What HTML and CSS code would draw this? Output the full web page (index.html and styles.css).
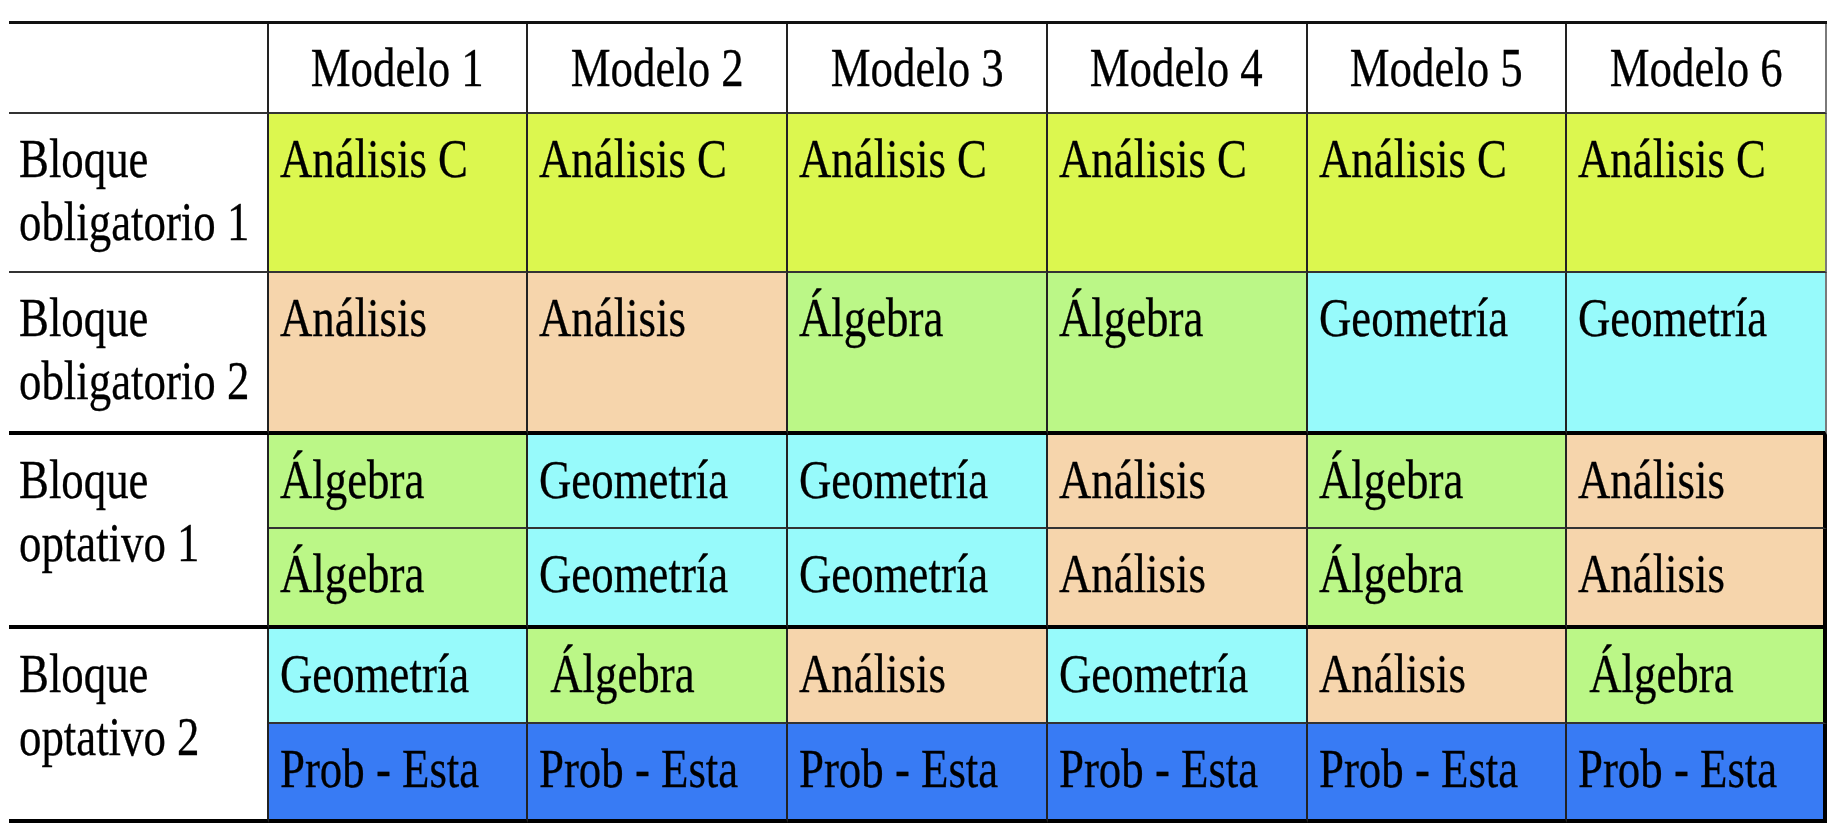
FILE: index.html
```html
<!DOCTYPE html>
<html lang="es">
<head>
<meta charset="utf-8">
<title>Modelos</title>
<link rel="stylesheet" href="styles.css">
</head>
<body>
<div class="grid">
  <div class="cell corner"></div>
  <div class="cell hd"><span class="t">Modelo 1</span></div>
  <div class="cell hd"><span class="t">Modelo 2</span></div>
  <div class="cell hd"><span class="t">Modelo 3</span></div>
  <div class="cell hd"><span class="t">Modelo 4</span></div>
  <div class="cell hd"><span class="t">Modelo 5</span></div>
  <div class="cell hd end"><span class="t">Modelo 6</span></div>

  <div class="cell lbl"><span class="t">Bloque<br>obligatorio 1</span></div>
  <div class="cell yel"><span class="t">Análisis C</span></div>
  <div class="cell yel"><span class="t">Análisis C</span></div>
  <div class="cell yel"><span class="t">Análisis C</span></div>
  <div class="cell yel"><span class="t">Análisis C</span></div>
  <div class="cell yel"><span class="t">Análisis C</span></div>
  <div class="cell yel end"><span class="t">Análisis C</span></div>

  <div class="cell lbl thick"><span class="t">Bloque<br>obligatorio 2</span></div>
  <div class="cell pea thick"><span class="t">Análisis</span></div>
  <div class="cell pea thick"><span class="t">Análisis</span></div>
  <div class="cell grn thick"><span class="t">Álgebra</span></div>
  <div class="cell grn thick"><span class="t">Álgebra</span></div>
  <div class="cell cyn thick"><span class="t">Geometría</span></div>
  <div class="cell cyn thick end"><span class="t">Geometría</span></div>

  <div class="cell lbl span2 thick"><span class="t">Bloque<br>optativo 1</span></div>
  <div class="cell grn"><span class="t">Álgebra</span></div>
  <div class="cell cyn"><span class="t">Geometría</span></div>
  <div class="cell cyn"><span class="t">Geometría</span></div>
  <div class="cell pea"><span class="t">Análisis</span></div>
  <div class="cell grn"><span class="t">Álgebra</span></div>
  <div class="cell pea end-thick"><span class="t">Análisis</span></div>

  <div class="cell grn thick"><span class="t">Álgebra</span></div>
  <div class="cell cyn thick"><span class="t">Geometría</span></div>
  <div class="cell cyn thick"><span class="t">Geometría</span></div>
  <div class="cell pea thick"><span class="t">Análisis</span></div>
  <div class="cell grn thick"><span class="t">Álgebra</span></div>
  <div class="cell pea thick end-thick"><span class="t">Análisis</span></div>

  <div class="cell lbl span2 thick"><span class="t">Bloque<br>optativo 2</span></div>
  <div class="cell cyn"><span class="t">Geometría</span></div>
  <div class="cell grn"><span class="t">&nbsp;Álgebra</span></div>
  <div class="cell pea"><span class="t">Análisis</span></div>
  <div class="cell cyn"><span class="t">Geometría</span></div>
  <div class="cell pea"><span class="t">Análisis</span></div>
  <div class="cell grn end-thick"><span class="t">&nbsp;Álgebra</span></div>

  <div class="cell blu thick"><span class="t">Prob - Esta</span></div>
  <div class="cell blu thick"><span class="t">Prob - Esta</span></div>
  <div class="cell blu thick"><span class="t">Prob - Esta</span></div>
  <div class="cell blu thick"><span class="t">Prob - Esta</span></div>
  <div class="cell blu thick"><span class="t">Prob - Esta</span></div>
  <div class="cell blu thick end-thick"><span class="t">Prob - Esta</span></div>
</div>
</body>
</html>
```

FILE: styles.css
```css
html, body {
  margin: 0;
  background: #ffffff;
}

body {
  padding: 21px 0 0 9px;
}

.grid {
  display: grid;
  width: 1818px;
  grid-template-columns: repeat(7, 1fr);
  grid-template-rows: 90px 159px 162px 94px 100px 95px 99px;
  border-top: 3px solid #111;
  font-family: "Liberation Serif", "Times New Roman", serif;
  font-size: 54px;
  line-height: 63px;
  color: #000;
}

.cell {
  box-sizing: border-box;
  border-right: 2px solid #222;
  border-bottom: 2px solid #333;
  padding: 14px 0 0 11px;
  white-space: nowrap;
  overflow: hidden;
}

.t {
  display: inline-block;
  transform: scaleX(0.83);
  transform-origin: 0 0;
  -webkit-text-stroke: 0.3px #000;
}

.hd {
  padding-top: 13px;
  padding-left: 0;
  text-align: center;
}

.hd .t {
  transform-origin: 50% 0;
}

.lbl {
  padding-left: 10px;
}

.span2 {
  grid-row: span 2;
}

.thick {
  border-bottom: 4px solid #000;
}

.end {
  border-right: 2px solid #7a7a7a;
}

.end-thick {
  border-right: 4px solid #000;
}

.yel { background: #dcf74f; }
.pea { background: #f6d5ac; }
.grn { background: #bbf787; }
.cyn { background: #97fafb; }
.blu { background: #387bf4; }
```
